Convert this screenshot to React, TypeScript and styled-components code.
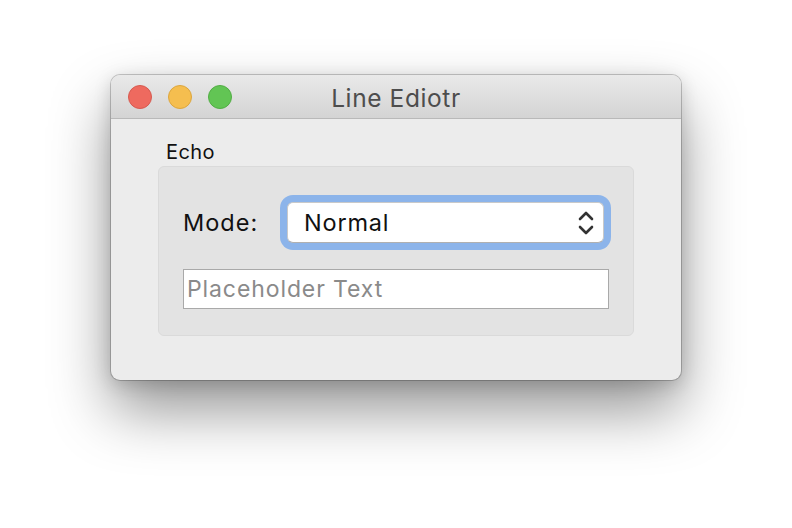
import React from "react";
import styled, { createGlobalStyle } from "styled-components";

const Global = createGlobalStyle`
  html, body { margin: 0; padding: 0; background: #ffffff; }
  body { font-family: Inter, "Liberation Sans", sans-serif; -webkit-font-smoothing: antialiased; }
`;

const Page = styled.div`
  width: 792px;
  height: 528px;
  padding: 75px 0 0 111px;
  box-sizing: border-box;
`;

const Window = styled.div`
  width: 570px;
  height: 305px;
  border-radius: 9px;
  background: #ececec;
  box-shadow: 0 0 0 1px rgba(0, 0, 0, 0.2), 0 30px 60px rgba(0, 0, 0, 0.42),
    0 4px 18px rgba(0, 0, 0, 0.16);
  overflow: hidden;
  display: flex;
  flex-direction: column;
`;

const TitleBar = styled.div`
  height: 44px;
  flex: none;
  box-sizing: border-box;
  border-bottom: 1px solid #b9b9b9;
  background: linear-gradient(#e9e9e9, #d4d4d4);
  display: grid;
  grid-template-columns: 1fr auto 1fr;
  align-items: center;
`;

const Lights = styled.div`
  display: flex;
  gap: 16px;
  padding-left: 17px;
`;

const Light = styled.div<{ $fill: string; $edge: string }>`
  width: 24px;
  height: 24px;
  border-radius: 50%;
  box-sizing: border-box;
  background: ${(p) => p.$fill};
  border: 1px solid ${(p) => p.$edge};
`;

const Title = styled.div`
  font-size: 24.5px;
  color: #4d4d4d;
  letter-spacing: 0.6px;
  padding-top: 2px;
`;

const Content = styled.div`
  padding: 19px 47px 0 47px;
  display: flex;
  flex-direction: column;
`;

const GroupLabel = styled.div`
  font-size: 20px;
  color: #111;
  padding-left: 8px;
  height: 28px;
  line-height: 28px;
  letter-spacing: 0.4px;
`;

const Group = styled.div`
  height: 170px;
  box-sizing: border-box;
  background: #e3e3e3;
  border: 1px solid #dadada;
  border-radius: 6px;
  padding: 35px 24px 0 24px;
  display: flex;
  flex-direction: column;
  gap: 26px;
`;

const Row = styled.div`
  display: flex;
  align-items: center;
  justify-content: space-between;
`;

const Label = styled.div`
  font-size: 23.5px;
  letter-spacing: 1px;
  color: #111;
`;

const Popup = styled.div`
  width: 317px;
  height: 41px;
  box-sizing: border-box;
  margin-right: 5px;
  border-radius: 6px;
  background: #ffffff;
  border: 1px solid #c9c9c9;
  border-bottom-color: #b0b0b0;
  box-shadow: 0 0 0 7px #8cb4ea;
  display: flex;
  align-items: center;
  justify-content: space-between;
  padding: 0 9px 0 16px;
  font-size: 23.5px;
  letter-spacing: 0.8px;
  color: #111;
`;

const Field = styled.div`
  height: 40px;
  box-sizing: border-box;
  background: #ffffff;
  border: 1px solid #a9a9a9;
  display: flex;
  align-items: center;
  padding-left: 3px;
  font-size: 23px;
  letter-spacing: 0.9px;
  color: #8a8a8a;
`;

const Chevrons = () => (
  <svg width="16" height="26" viewBox="0 0 16 26" fill="none">
    <path d="M2 9 L8 3 L14 9" stroke="#333" strokeWidth="2.6" strokeLinecap="round" strokeLinejoin="round" />
    <path d="M2 17 L8 23 L14 17" stroke="#333" strokeWidth="2.6" strokeLinecap="round" strokeLinejoin="round" />
  </svg>
);

export default function App() {
  return (
    <>
      <Global />
      <Page>
        <Window>
          <TitleBar>
            <Lights>
              <Light $fill="#ee6a5f" $edge="#d65a50" />
              <Light $fill="#f5be4f" $edge="#dca63e" />
              <Light $fill="#62c554" $edge="#52ad45" />
            </Lights>
            <Title>Line Ediotr</Title>
            <div />
          </TitleBar>
          <Content>
            <GroupLabel>Echo</GroupLabel>
            <Group>
              <Row>
                <Label>Mode:</Label>
                <Popup>
                  <span>Normal</span>
                  <Chevrons />
                </Popup>
              </Row>
              <Field>Placeholder Text</Field>
            </Group>
          </Content>
        </Window>
      </Page>
    </>
  );
}
